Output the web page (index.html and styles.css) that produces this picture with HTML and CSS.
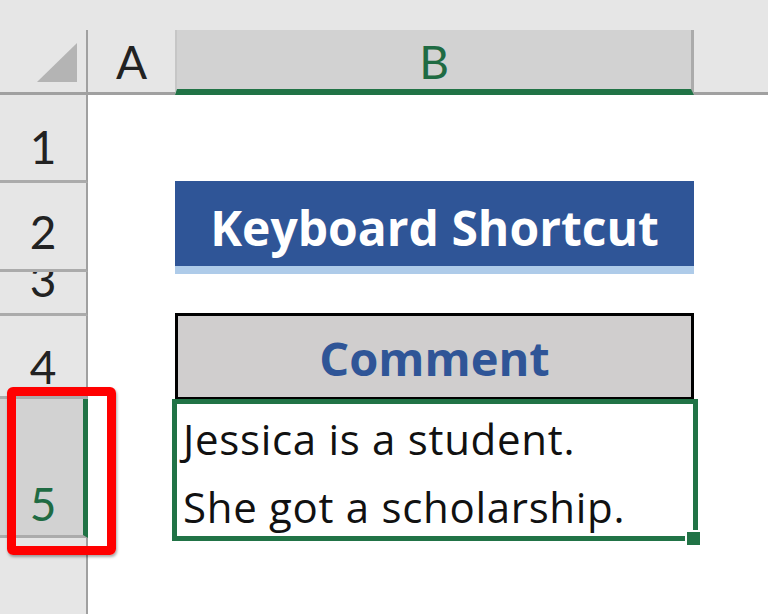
FILE: index.html
```html
<!DOCTYPE html>
<html>
<head>
<meta charset="utf-8">
<link rel="stylesheet" href="styles.css">
</head>
<body>
<div class="top"></div>
<div class="colhead">
  <div class="corner">
    <svg width="86" height="62" viewBox="0 0 86 62"><polygon points="77,13 77,52 37,52" fill="#b4b4b4"/></svg>
  </div>
  <div class="ch ch-a">A</div>
  <div class="ch ch-b">B</div>
  <div class="ch ch-rest"></div>
</div>
<div class="main">
  <div class="rowheads">
    <div class="rh r1"><span>1</span></div>
    <div class="rh r2"><span>2</span></div>
    <div class="rh r3"><span>3</span></div>
    <div class="rh r4"><span>4</span></div>
    <div class="rh r5"><span>5</span></div>
    <div class="rh rest"></div>
  </div>
  <div class="sheet">
    <div class="title">Keyboard Shortcut</div>
    <div class="comment-h">Comment</div>
    <div class="data">
      <p>Jessica is a student.</p>
      <p>She got a scholarship.</p>
      <span class="handle"></span>
    </div>
  </div>
</div>
<div class="mark"></div>
</body>
</html>
```

FILE: styles.css
```css
* { box-sizing: border-box; }
html, body { margin: 0; padding: 0; }
body {
  width: 768px;
  height: 614px;
  overflow: hidden;
  background: #fff;
  font-family: "Lato", "Open Sans", sans-serif;
  position: relative;
}
.top { height: 30px; background: #e6e6e6; }
.colhead { display: flex; height: 65px; background: #e6e6e6; }
.corner {
  width: 88px;
  border-right: 2px solid #a0a0a0;
  border-bottom: 3px solid #a0a0a0;
}
.corner svg { display: block; }
.ch {
  display: flex;
  align-items: flex-end;
  justify-content: center;
  font-size: 46px;
  line-height: 46px;
  color: #222;
  border-bottom: 3px solid #a0a0a0;
  padding-bottom: 7px;
}
.ch-a { width: 87px; }
.ch-b {
  width: 519px;
  background: #d2d2d2;
  color: #1f6b43;
  border-left: 2px solid #c6c6c6;
  border-right: 3px solid #ababab;
  border-bottom: 6px solid #217346;
  padding-bottom: 4px;
}
.ch-rest { flex: 1; }
.main { display: flex; height: 519px; }
.rowheads { width: 88px; display: flex; flex-direction: column; }
.rh {
  width: 88px;
  background: #e6e6e6;
  border-right: 2px solid #a0a0a0;
  border-bottom: 3px solid #ababab;
  display: flex;
  align-items: flex-end;
  justify-content: center;
  overflow: hidden;
  font-size: 46px;
  line-height: 46px;
  color: #222;
  padding-bottom: 10px;
}
.r1 { height: 88px; }
.r2 { height: 89px; padding-bottom: 14px; }
.r3 { height: 44px; }
.r4 { height: 83px; padding-bottom: 6px; }
.r5 {
  height: 139px;
  background: #d2d2d2;
  color: #1f6b43;
  border-right: 5px solid #217346;
  padding-bottom: 8px;
}
.r5 span { margin-right: -3px; }
.rest { flex: 1; border-bottom: none; }
.sheet {
  padding-left: 87px;
  display: flex;
  flex-direction: column;
  align-items: flex-start;
  font-family: "Open Sans", "Lato", sans-serif;
}
.title {
  margin-top: 86px;
  width: 519px;
  height: 93px;
  background: #2f5597;
  border-bottom: 8px solid #aecbe9;
  color: #fff;
  font-weight: 700;
  font-size: 48px;
  line-height: 76px;
  padding-top: 9px;
  text-align: center;
  white-space: nowrap;
}
.comment-h {
  margin-top: 39px;
  width: 519px;
  height: 87px;
  background: #d0cece;
  border: 3px solid #000;
  color: #2f5597;
  font-weight: 700;
  font-size: 47px;
  line-height: 77px;
  padding-top: 4px;
  text-align: center;
}
.data {
  position: relative;
  margin-top: -1px;
  margin-left: -3px;
  width: 526px;
  height: 142px;
  border: 5px solid #217346;
  background: #fff;
  padding: 1px 0 0 6px;
  font-size: 42px;
  line-height: 68px;
  letter-spacing: 0.7px;
  color: #111;
  white-space: nowrap;
}
.data p { margin: 0; }
.handle {
  position: absolute;
  right: -7px;
  bottom: -9px;
  width: 13px;
  height: 13px;
  background: #217346;
  box-shadow: 0 0 0 2px #fff;
}
.mark {
  position: absolute;
  left: 7px;
  top: 387px;
  width: 109px;
  height: 168px;
  border: 9px solid #ff0000;
  border-radius: 6px;
  box-shadow: 1px 2px 3px rgba(0,0,0,0.35);
}
```
